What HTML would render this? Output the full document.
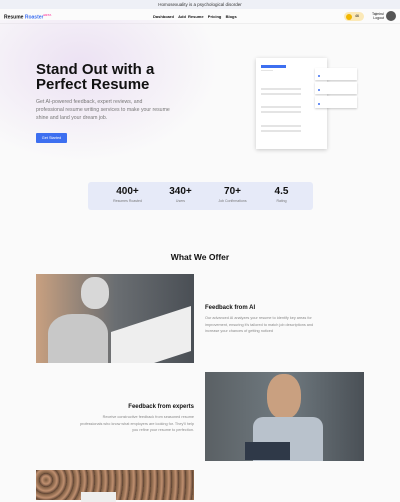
<!DOCTYPE html>
<html><head><meta charset="utf-8"><style>
*{margin:0;padding:0;box-sizing:border-box}
body{width:400px;height:500px;overflow:hidden;background:#fafafa;font-family:"Liberation Sans",sans-serif;position:relative;color:#111}
.a{position:absolute}
.bar{top:0;left:0;width:400px;height:9px;background:#eef0f6;font-size:4.5px;text-align:center;line-height:9px;color:#333}
.nav{top:9px;left:0;width:400px;height:15px;background:#fbfbfb;border-bottom:1px solid #eee}
.glow{top:20px;left:0;width:230px;height:150px;background:radial-gradient(ellipse at 35% 30%,rgba(230,215,240,.7),rgba(250,250,250,0) 65%)}
.l{background:#e4e4e4;height:2px}
</style></head><body>
<div class="a bar">Homosexuality is a psychological disorder</div>
<div class="a nav">
 <div class="a" style="left:4px;top:4px;font-size:5px;font-weight:bold">Resume <span style="color:#3d6ff0">Roaster</span><sup style="color:#f5a;font-size:3px">BETA</sup></div>
 <div class="a" style="left:153px;top:5px;font-size:4px;font-weight:bold;word-spacing:1px">Dashboard&nbsp;&nbsp;Add Resume&nbsp;&nbsp;Pricing&nbsp;&nbsp;Blogs</div>
 <div class="a" style="left:344px;top:3px;width:20px;height:9px;border-radius:5px;background:#fbe9b8"><div class="a" style="left:2px;top:1.5px;width:6px;height:6px;border-radius:50%;background:#f2b700"></div><div class="a" style="left:11px;top:2px;font-size:3.5px">46</div></div>
 <div class="a" style="left:368px;top:3px;font-size:3.5px;text-align:right;width:16px;line-height:4px">Tajmirul<br>Logout</div>
 <div class="a" style="left:386px;top:2px;width:10px;height:10px;border-radius:50%;background:#555"></div>
</div>
<div class="a glow"></div>
<div class="a" style="left:36px;top:63px;font-size:15px;font-weight:bold;line-height:14.5px;width:170px">Stand Out with a Perfect Resume</div>
<div class="a" style="left:36px;top:98px;font-size:5.2px;line-height:8.2px;color:#777;width:135px">Get AI-powered feedback, expert reviews, and professional resume writing services to make your resume shine and land your dream job.</div>
<div class="a" style="left:36px;top:133px;width:31px;height:10px;background:#3d6ff0;border-radius:1px;color:#fff;font-size:3.8px;line-height:10px;text-align:center">Get Started</div>
<div class="a" style="left:256px;top:58px;width:71px;height:91px;background:#fff;box-shadow:0 1px 4px rgba(0,0,0,.2)">
 <div class="a" style="left:5px;top:7px;width:25px;height:3px;background:#3d6ff0"></div>
 <div class="a l" style="left:5px;top:12px;width:12px;height:1px"></div>
 <div class="a l" style="left:5px;top:30px;width:40px"></div><div class="a l" style="left:5px;top:35px;width:40px"></div><div class="a l" style="left:5px;top:48px;width:40px"></div><div class="a l" style="left:5px;top:53px;width:40px"></div><div class="a l" style="left:5px;top:67px;width:40px"></div><div class="a l" style="left:5px;top:72px;width:40px"></div>
</div>
<div class="a" style="left:315px;top:68px;width:42px;height:12px;background:#fff;box-shadow:0 1px 2px rgba(0,0,0,.2)"><div class="a" style="left:3px;top:7px;width:2px;height:2px;border-radius:50%;background:#3d6ff0"></div></div>
<div class="a" style="left:315px;top:82px;width:42px;height:12px;background:#fff;box-shadow:0 1px 2px rgba(0,0,0,.2)"><div class="a" style="left:3px;top:7px;width:2px;height:2px;border-radius:50%;background:#3d6ff0"></div></div>
<div class="a" style="left:315px;top:96px;width:42px;height:12px;background:#fff;box-shadow:0 1px 2px rgba(0,0,0,.2)"><div class="a" style="left:3px;top:7px;width:2px;height:2px;border-radius:50%;background:#3d6ff0"></div></div>
<div class="a" style="left:88px;top:182px;width:225px;height:28px;background:#e6eaf8;border-radius:3px"></div>
<div class="a" style="top:186px;left:0;width:400px;font-weight:bold;font-size:10px">
 <div class="a" style="left:100px;width:55px;text-align:center">400+</div>
 <div class="a" style="left:153px;width:55px;text-align:center">340+</div>
 <div class="a" style="left:205px;width:55px;text-align:center">70+</div>
 <div class="a" style="left:254px;width:55px;text-align:center">4.5</div>
</div>
<div class="a" style="top:199px;left:0;width:400px;font-size:3.5px;color:#777">
 <div class="a" style="left:100px;width:55px;text-align:center">Resumes Roasted</div>
 <div class="a" style="left:153px;width:55px;text-align:center">Users</div>
 <div class="a" style="left:205px;width:55px;text-align:center">Job Confirmations</div>
 <div class="a" style="left:254px;width:55px;text-align:center">Rating</div>
</div>
<div class="a" style="left:0;top:252px;width:400px;text-align:center;font-weight:bold;font-size:8.5px">What We Offer</div>
<div class="a" style="left:36px;top:274px;width:158px;height:89px;overflow:hidden;background:linear-gradient(90deg,#c8a080,#6a6e72 50%,#4a4f55)">
 <div class="a" style="left:45px;top:3px;width:28px;height:32px;border-radius:45%;background:#d8d8d8"></div>
 <div class="a" style="left:12px;top:40px;width:60px;height:49px;border-radius:40% 40% 0 0;background:#c8c8c8"></div>
 <div class="a" style="left:75px;top:45px;width:80px;height:45px;background:#eee;transform:skewY(-18deg)"></div></div>
<div class="a" style="left:205px;top:305px;font-size:6px;font-weight:bold">Feedback from AI</div>
<div class="a" style="left:205px;top:315px;width:120px;font-size:3.8px;line-height:6.5px;color:#888">Our advanced AI analyzes your resume to identify key areas for improvement, ensuring it's tailored to match job descriptions and increase your chances of getting noticed</div>
<div class="a" style="left:205px;top:372px;width:159px;height:89px;overflow:hidden;background:linear-gradient(90deg,#5a6064,#707a80 50%,#4a5056)"><div class="a" style="left:62px;top:2px;width:34px;height:45px;border-radius:45%;background:#c9a080"></div><div class="a" style="left:48px;top:45px;width:70px;height:44px;background:#b9c2cc;border-radius:10px 10px 0 0"></div><div class="a" style="left:40px;top:70px;width:45px;height:18px;background:#2f3948"></div></div>
<div class="a" style="left:80px;top:404px;width:114px;text-align:right;font-size:6px;font-weight:bold">Feedback from experts</div>
<div class="a" style="left:80px;top:414px;width:114px;text-align:right;font-size:3.8px;line-height:6.5px;color:#888">Receive constructive feedback from seasoned resume professionals who know what employers are looking for. They'll help you refine your resume to perfection.</div>
<div class="a" style="left:36px;top:470px;width:158px;height:30px;background:repeating-radial-gradient(circle at 10px 10px,#7a5a40 0,#c09070 4px,#5a4030 7px),#8a6a50"><div class="a" style="left:45px;top:22px;width:35px;height:10px;background:#eee"></div></div>
</body></html>
